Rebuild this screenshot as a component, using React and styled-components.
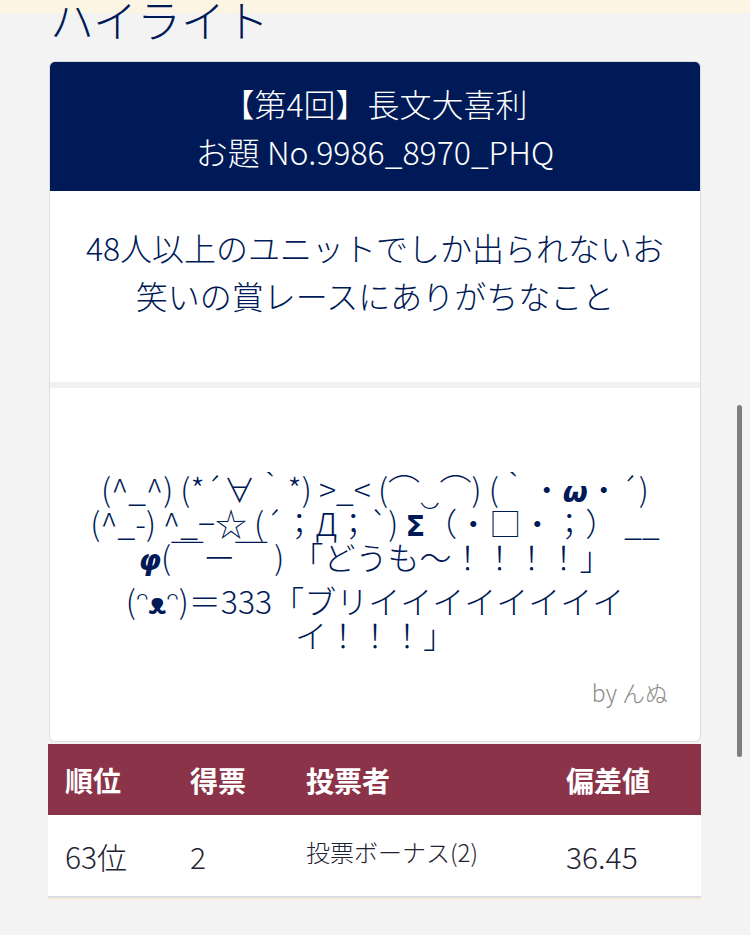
import React from 'react';
import styled, { createGlobalStyle } from 'styled-components';

const GlobalStyle = createGlobalStyle`
  html, body {
    margin: 0;
    padding: 0;
    background: #f3f3f3;
  }
  body {
    font-family: "Noto Sans CJK JP", "Noto Sans", sans-serif;
    font-weight: 300;
  }
`;

const columns = [
  { label: '順位', value: '63位' },
  { label: '得票', value: '2' },
  { label: '投票者', value: '投票ボーナス(2)', small: true },
  { label: '偏差値', value: '36.45' },
];

const App = () => {
  return (
    <Page>
      <GlobalStyle />
      <Heading>ハイライト</Heading>

      <Card>
        <CardHeader>
          <div>【第4回】長文大喜利</div>
          <div>お題 No.9986_8970_PHQ</div>
        </CardHeader>
        <Odai>48人以上のユニットでしか出られないお笑いの賞レースにありがちなこと</Odai>
        <Answer>
          <Kaomoji>
            <Line>(^_^) (*´∀｀*)  &gt;_&lt; (⌒‿⌒) (｀・<Sym $italic>ω</Sym>・´)</Line>
            <Line>(^_-) ^_−☆ (´；Д；`) <Sym>Σ</Sym>（・□・；） __</Line>
            <Line><Sym $italic>φ</Sym>(￣ー￣ ) 「どうも〜！！！！」</Line>
            <Line $gap>(ᵔ<Sym>ᴥ</Sym>ᵔ)＝333「ブリイイイイイイイイ</Line>
            <Line>イ！！！」</Line>
          </Kaomoji>
          <Author>by んぬ</Author>
        </Answer>
      </Card>

      <Table>
        <HeadRow>
          {columns.map((c) => (
            <HeadCell key={c.label}>{c.label}</HeadCell>
          ))}
        </HeadRow>
        <BodyRow>
          {columns.map((c) => (
            <BodyCell key={c.label} $small={c.small}>{c.value}</BodyCell>
          ))}
        </BodyRow>
      </Table>

      <Scrollbar />
    </Page>
  );
};

export default App;

const Page = styled.main`
  min-height: 935px;
  padding: 0 49px 40px 48px;
  box-sizing: border-box;
  background: linear-gradient(#fdf5e4 0 16px, #f3f3f3 16px);
  color: #001a57;
`;

const Heading = styled.h2`
  margin: -3px 0 20px 2px;
  font-size: 44px;
  line-height: 44px;
  font-weight: 300;
  color: #001a57;
`;

const Card = styled.section`
  margin-left: 1px;
  background: #fff;
  border: 1px solid #dcdcdc;
  border-radius: 6px;
  overflow: hidden;
`;

const CardHeader = styled.header`
  background: #001a57;
  color: #fff;
  text-align: center;
  font-size: 32px;
  line-height: 48px;
  padding: 17px 20px 16px;
`;

const Odai = styled.div`
  padding: 32px 30px 63px;
  text-align: center;
  font-size: 32px;
  line-height: 48px;
  color: #001a57;
  border-bottom: 6px solid #f1f1f1;
`;

const Answer = styled.div`
  padding: 83px 20px 34px;
  display: flex;
  flex-direction: column;
`;

const Kaomoji = styled.div`
  text-align: center;
  font-size: 32px;
  line-height: 34px;
  color: #001a57;
  white-space: nowrap;
`;

const Line = styled.div`
  height: 34px;
  margin-top: ${(p) => (p.$gap ? '10px' : '0')};
`;

const Sym = styled.span`
  font-family: "DejaVu Sans", sans-serif;
  font-weight: 700;
  font-style: ${(p) => (p.$italic ? 'italic' : 'normal')};
  font-size: 0.9em;
  line-height: 0;
`;

const Author = styled.div`
  margin-top: 26px;
  margin-right: 12px;
  text-align: right;
  font-size: 23px;
  line-height: 30px;
  color: #8a8a8a;
`;

const Table = styled.div`
  margin-top: 2px;
  background: #fff;
  border-bottom: 2px solid #dcdce0;
  box-shadow: 0 2px 0 #f7efdc;
`;

const grid = `
  display: grid;
  grid-template-columns: 125px 116px 260px 1fr;
`;

const HeadRow = styled.div`
  ${grid}
  height: 71px;
  align-items: center;
  background: #8b3449;
  color: #fff;
`;

const HeadCell = styled.div`
  padding-left: 17px;
  font-size: 28px;
  font-weight: 700;
`;

const BodyRow = styled.div`
  ${grid}
  height: 81px;
  align-items: center;
  color: #1f2230;
`;

const BodyCell = styled.div`
  padding-left: 17px;
  font-size: ${(p) => (p.$small ? '24px' : '30px')};
  margin-top: ${(p) => (p.$small ? '-8px' : '0')};
  font-weight: 300;
`;

const Scrollbar = styled.div`
  position: fixed;
  top: 405px;
  right: 8px;
  width: 5px;
  height: 352px;
  border-radius: 3px;
  background: #7f7f7f;
`;
